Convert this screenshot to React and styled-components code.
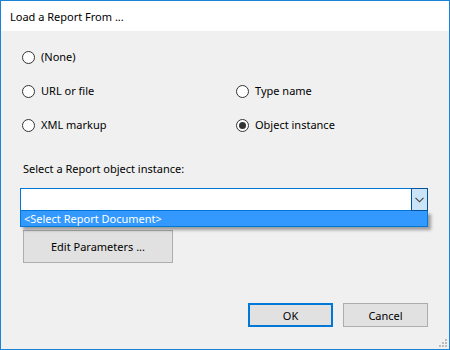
import styled, { createGlobalStyle } from "styled-components";

const GlobalStyle = createGlobalStyle`
    html, body {
        margin: 0;
        padding: 0;
        background: #f0f0f0;
    }
    body {
        font-family: "Noto Sans", "Open Sans", sans-serif;
        font-size: 11px;
        color: #000;
    }
`;

const options = [
    { label: "(None)", checked: false },
    { label: "", checked: false, empty: true },
    { label: "URL or file", checked: false },
    { label: "Type name", checked: false },
    { label: "XML markup", checked: false },
    { label: "Object instance", checked: true },
];

export default function App() {
    return (
        <>
            <GlobalStyle />
            <Window>
                <TitleBar>
                    <Title>Load a Report From ...</Title>
                </TitleBar>
                <Body>
                    <RadioGrid>
                        {options.map((o, i) =>
                            o.empty ? (
                                <span key={i} />
                            ) : (
                                <RadioRow key={i}>
                                    <RadioCircle checked={o.checked} />
                                    <RadioLabel>{o.label}</RadioLabel>
                                </RadioRow>
                            )
                        )}
                    </RadioGrid>
                    <FieldLabel>Select a Report object instance:</FieldLabel>
                    <ComboWrap>
                        <Combo>
                            <ComboField />
                            <DropButton>
                                <svg width="9" height="6" viewBox="0 0 9 6">
                                    <path
                                        d="M0.5 0.8 L4.5 4.8 L8.5 0.8"
                                        fill="none"
                                        stroke="#404040"
                                        strokeWidth="1.1"
                                    />
                                </svg>
                            </DropButton>
                        </Combo>
                        <DropList>
                            <Option>&lt;Select Report Document&gt;</Option>
                        </DropList>
                    </ComboWrap>
                    <EditButton>Edit Parameters ...</EditButton>
                    <Footer>
                        <DialogButton primary>OK</DialogButton>
                        <DialogButton>Cancel</DialogButton>
                    </Footer>
                    <Grip width="8" height="8" viewBox="0 0 8 8">
                        <rect x="6" y="0" width="2" height="2" />
                        <rect x="3" y="3" width="2" height="2" />
                        <rect x="6" y="3" width="2" height="2" />
                        <rect x="0" y="6" width="2" height="2" />
                        <rect x="3" y="6" width="2" height="2" />
                        <rect x="6" y="6" width="2" height="2" />
                    </Grip>
                </Body>
            </Window>
        </>
    );
}

const Window = styled.div`
    width: 450px;
    height: 350px;
    box-sizing: border-box;
    border: 1px solid #1883d7;
    display: flex;
    flex-direction: column;
    background: #f0f0f0;
`;
const TitleBar = styled.div`
    height: 30px;
    background: #fff;
    display: flex;
    align-items: center;
    padding-left: 9px;
    flex-shrink: 0;
`;
const Title = styled.span`
    font-size: 11px;
    color: #000;
    padding-top: 1px;
`;
const Body = styled.div`
    flex: 1;
    position: relative;
    display: flex;
    flex-direction: column;
    padding: 9px 21px 22px 19px;
`;
const RadioGrid = styled.div`
    display: grid;
    grid-template-columns: 214px 1fr;
    grid-auto-rows: 34px;
    padding-left: 2px;
`;
const RadioRow = styled.label`
    display: flex;
    align-items: center;
    gap: 6px;
`;
const RadioCircle = styled.span`
    width: 13px;
    height: 13px;
    box-sizing: border-box;
    border-radius: 50%;
    border: 1px solid #333;
    background: #fff;
    display: flex;
    align-items: center;
    justify-content: center;
    &::after {
        content: "";
        width: 7px;
        height: 7px;
        border-radius: 50%;
        background: #333;
        display: ${(p) => (p.checked ? "block" : "none")};
    }
`;
const RadioLabel = styled.span`
    line-height: 16px;
`;
const FieldLabel = styled.div`
    margin-top: 19px;
    padding-left: 3px;
    line-height: 16px;
`;
const ComboWrap = styled.div`
    position: relative;
    margin-top: 11px;
`;
const Combo = styled.div`
    display: flex;
    height: 23px;
    box-sizing: border-box;
    border: 1px solid #0078d7;
    background: #fff;
`;
const ComboField = styled.div`
    flex: 1;
`;
const DropButton = styled.div`
    width: 17px;
    margin: -1px -1px -1px 0;
    box-sizing: border-box;
    border: 1px solid #005499;
    background: #cce4f7;
    display: flex;
    align-items: center;
    justify-content: center;
`;
const DropList = styled.div`
    position: absolute;
    top: 100%;
    left: 0;
    right: 0;
    height: 16px;
    box-sizing: border-box;
    background: #3399ff;
    border: 1px solid #0078d7;
    border-top: none;
    box-shadow: 3px 3px 3px rgba(0, 0, 0, 0.35);
    z-index: 2;
`;
const Option = styled.div`
    color: #fff;
    line-height: 15px;
    padding-left: 3px;
`;
const EditButton = styled.button`
    margin-top: 19px;
    margin-left: 3px;
    width: 150px;
    height: 33px;
    box-sizing: border-box;
    border: 1px solid #adadad;
    background: #e1e1e1;
    font: inherit;
    color: #000;
    padding: 0;
`;
const Footer = styled.div`
    margin-top: auto;
    display: flex;
    justify-content: flex-end;
    gap: 10px;
`;
const DialogButton = styled.button`
    width: 85px;
    height: 24px;
    box-sizing: border-box;
    border: ${(p) => (p.primary ? "2px solid #0078d7" : "1px solid #adadad")};
    background: #e1e1e1;
    font: inherit;
    color: #000;
    padding: 0;
`;
const Grip = styled.svg`
    position: absolute;
    right: 2px;
    bottom: 2px;
    fill: #bcbcbc;
`;
